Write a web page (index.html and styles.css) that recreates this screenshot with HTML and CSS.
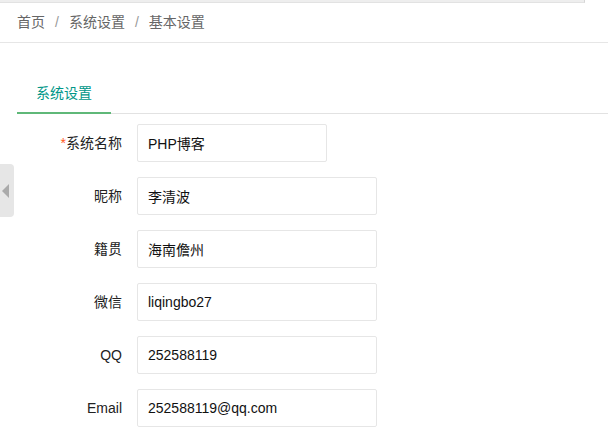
FILE: index.html
```html
<!DOCTYPE html>
<html lang="zh-CN">
<head>
  <meta charset="UTF-8">
  <title>基本设置</title>
  <link rel="stylesheet" href="styles.css">
</head>
<body>
  <div class="topbar"></div>
  <div class="crumbs">
    <a>首页</a><span class="sep">/</span><a>系统设置</a><span class="sep">/</span><a>基本设置</a>
  </div>

  <div class="side-toggle"><span class="arrow"></span></div>

  <div class="tabs">
    <ul class="tab-title">
      <li class="this">系统设置</li>
    </ul>
  </div>

  <form class="form">
    <div class="form-item">
      <label class="form-label"><span class="req">*</span>系统名称</label>
      <input class="input short" type="text" value="PHP博客">
    </div>
    <div class="form-item">
      <label class="form-label">昵称</label>
      <input class="input" type="text" value="李清波">
    </div>
    <div class="form-item">
      <label class="form-label">籍贯</label>
      <input class="input" type="text" value="海南儋州">
    </div>
    <div class="form-item">
      <label class="form-label">微信</label>
      <input class="input" type="text" value="liqingbo27">
    </div>
    <div class="form-item">
      <label class="form-label">QQ</label>
      <input class="input" type="text" value="252588119">
    </div>
    <div class="form-item">
      <label class="form-label">Email</label>
      <input class="input" type="text" value="252588119@qq.com">
    </div>
  </form>
</body>
</html>
```

FILE: styles.css
```css
body { margin: 0; background: #fff; font-family: "Liberation Sans", Arial, "Noto Sans CJK SC", sans-serif; font-size: 14px; color: #333; overflow: hidden; }
.topbar { width: 584px; height: 2px; background: #eee; border-bottom: 1px solid #e2e2e2; border-right: 1px solid #d6d6d6; }
.crumbs { height: 39px; line-height: 39px; padding-left: 17px; border-bottom: 1px solid #e6e6e6; color: #666; }
.crumbs a { color: #666; }
.crumbs .sep { color: #999; margin: 0 10px; }
.side-toggle { position: absolute; left: 0; top: 164px; width: 14px; height: 53px; background: #e6e6e6; border-radius: 0 4px 4px 0; }
.side-toggle .arrow { position: absolute; left: 2px; top: 20px; width: 0; height: 0; border-top: 7px solid transparent; border-bottom: 7px solid transparent; border-right: 7px solid #aaa; }
.tabs { margin: 30px 0 0 17px; }
.tab-title { list-style: none; margin: 0; padding: 0; height: 40px; border-bottom: 1px solid #e2e2e2; display: flex; }
.tab-title li { position: relative; width: 94px; height: 40px; line-height: 40px; text-align: center; }
.tab-title li.this { color: #009688; }
.tab-title li.this::after { content: ""; position: absolute; left: 0; right: 0; bottom: -1px; height: 2px; background: #5fb878; }
.form { margin-top: 10px; padding-left: 27px; }
.form-item { display: flex; margin-bottom: 15px; }
.form-label { width: 80px; padding: 0 15px; line-height: 38px; text-align: right; color: #222; }
.req { color: #ff5722; }
.input { box-sizing: border-box; width: 240px; height: 38px; margin: 0; padding: 0 10px; border: 1px solid #e6e6e6; border-radius: 2px; font: inherit; color: #111; outline: none; }
.input.short { width: 190px; }
```
